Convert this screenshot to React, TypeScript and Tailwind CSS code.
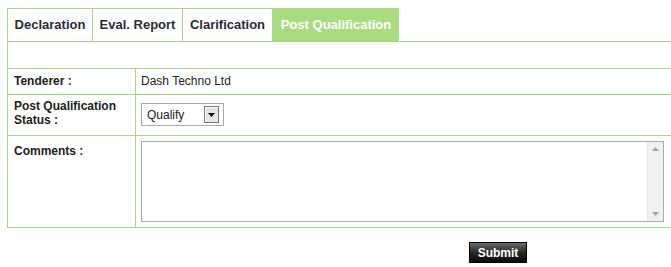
import React from "react";

const tabs = [
  { label: "Declaration", width: "w-[86px]" },
  { label: "Eval. Report", width: "w-[90px]" },
  { label: "Clarification", width: "w-[90px]" },
  { label: "Post Qualification", width: "w-[126px]", active: true },
];

const cellBorder = "border border-[#a6d784]";

export default function App() {
  return (
    <div className="h-[267px] w-[671px] overflow-hidden bg-white font-['Liberation_Sans',Arial,sans-serif] text-[#333]">
      <div className="w-[760px] pl-[7px] pt-[8px]">
        {/* tab strip */}
        <div className="flex h-[34px]">
          {tabs.map((t, i) => (
            <div
              key={t.label}
              className={`flex items-center justify-center border-t border-b border-[#a6d784] text-[13px] font-bold ${t.width} ${
                i === 0 ? "border-l" : ""
              } ${
                t.active
                  ? "bg-[#a9dc81] text-white"
                  : "border-r bg-white text-[#2b2b3b]"
              }`}
            >
              {t.label}
            </div>
          ))}
          <div className="flex-1 border-b border-[#a6d784]" />
        </div>

        <table className="w-full border-collapse text-[12px]">
          <tbody>
            <tr className="h-[26px]">
              <td colSpan={2} className={`${cellBorder} border-t-0`} />
            </tr>
            <tr className="h-[26px]">
              <td className={`${cellBorder} w-[128px] px-[6px] font-bold text-[#222]`}>
                Tenderer :
              </td>
              <td className={`${cellBorder} px-[5px] text-[#222]`}>Dash Techno Ltd</td>
            </tr>
            <tr className="h-[41px]">
              <td className={`${cellBorder} px-[6px] pt-[4px] align-top font-bold leading-[14px] text-[#222]`}>
                Post Qualification
                <br />
                Status :
              </td>
              <td className={`${cellBorder} px-[5px] align-middle`}>
                <div className="flex h-[23px] w-[83px] items-center justify-between border border-[#aaa] bg-white pl-[5px] pr-[4px] text-[12px] text-[#222]">
                  <span>Qualify</span>
                  <span className="flex h-[17px] w-[15px] items-center justify-center border border-[#777] bg-[#e4e4e4] shadow-[inset_1px_1px_0_#fff]">
                    <svg width="7" height="4" viewBox="0 0 7 4">
                      <path d="M0 0h7L3.5 4z" fill="#000" />
                    </svg>
                  </span>
                </div>
              </td>
            </tr>
            <tr className="h-[92px]">
              <td className={`${cellBorder} px-[6px] pt-[6px] align-top font-bold text-[#222]`}>
                Comments :
              </td>
              <td className={`${cellBorder} px-[5px] align-middle`}>
                <div className="flex h-[81px] w-[523px] border border-[#aaa] bg-white">
                  <textarea className="h-full flex-1 resize-none overflow-hidden p-1 text-[12px] outline-none" />
                  <div className="flex w-[16px] flex-col items-center justify-between border-l border-[#e6e6e6] bg-[#f0f0f0] py-[5px]">
                    <svg width="7" height="4" viewBox="0 0 7 4">
                      <path d="M3.5 0L7 4H0z" fill="#a3a3a3" />
                    </svg>
                    <svg width="7" height="4" viewBox="0 0 7 4">
                      <path d="M0 0h7L3.5 4z" fill="#a3a3a3" />
                    </svg>
                  </div>
                </div>
              </td>
            </tr>
          </tbody>
        </table>

        <div className="pl-[462px] pt-[12px]">
          <button className="h-[21px] w-[58px] border border-black bg-gradient-to-b from-[#6a6a6a] via-[#2a2a2a] to-[#0a0a0a] text-[12px] font-bold text-white">
            Submit
          </button>
        </div>
      </div>
    </div>
  );
}
